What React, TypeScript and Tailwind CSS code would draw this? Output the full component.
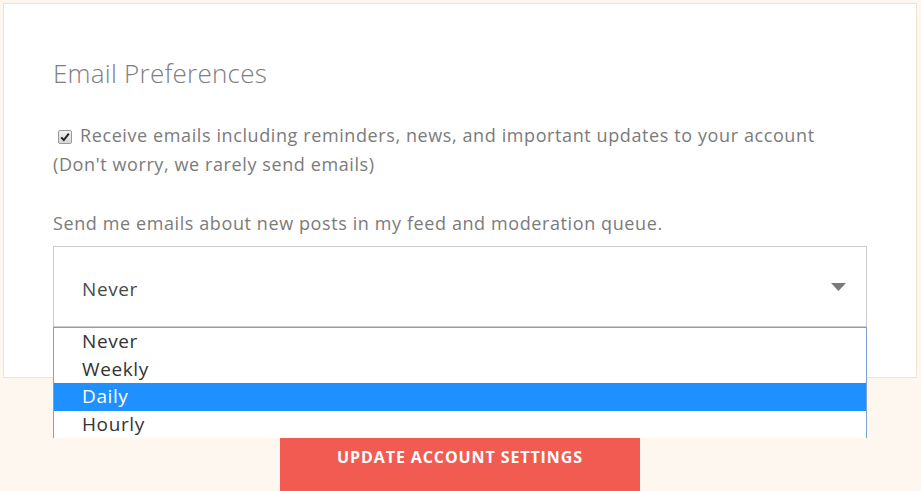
import { useState } from "react";

const options = ["Never", "Weekly", "Daily", "Hourly"];

const CheckMark = () => (
    <span className="inline-flex items-center justify-center w-[14px] h-[14px] rounded-[2px] border border-[#9a9a9a] bg-gradient-to-b from-[#f2f2f2] to-[#d6d6d6] mr-[8px] relative top-[1px]">
        <svg width="10" height="10" viewBox="0 0 10 10">
            <path d="M1.2 5.4 L3.8 8 L8.8 1.6" stroke="#222" strokeWidth="2" fill="none" />
        </svg>
    </span>
);

const App = () => {
    const [selected] = useState("Never");
    const [hovered, setHovered] = useState("Daily");

    return (
        <div
            className="w-[921px] h-[491px] bg-[#fdf7f0] overflow-hidden pt-[3px] pl-[3px] pr-[4px]"
            style={{ fontFamily: '"Open Sans", "Liberation Sans", sans-serif' }}
        >
            <div className="bg-white border border-[#efe3d6] px-[49px] pt-[54px] pb-[50px]">
                <h2 className="text-[26px] leading-[31px] font-light text-[#7e7e7e] tracking-[0.25px]">
                    Email Preferences
                </h2>
                <div className="mt-[32px] text-[18px] leading-[29px] text-[#7b7b7b] tracking-[0.6px]">
                    <label className="flex items-center pl-[5px]">
                        <CheckMark />
                        Receive emails including reminders, news, and important updates to your account
                    </label>
                    <div>(Don't worry, we rarely send emails)</div>
                </div>
                <p className="mt-[30px] text-[18px] leading-[29px] text-[#7b7b7b] tracking-[0.6px]">
                    Send me emails about new posts in my feed and moderation queue.
                </p>
                <div className="relative mt-[8px]">
                    <div className="h-[81px] border border-[#cccccc] flex items-center justify-between pl-[28px] pr-[20px] pt-[5px] text-[19px] text-[#4a4a4a] tracking-[0.6px]">
                        <span>{selected}</span>
                        <svg width="15" height="8" viewBox="0 0 15 8" className="-mt-[5px]">
                            <path d="M0 0 H15 L7.5 8 Z" fill="#7a7a7a" />
                        </svg>
                    </div>
                    <ul className="absolute left-0 right-0 top-[81px] h-[111px] overflow-hidden bg-white border border-b-0 border-[#7e9fd6] z-10">
                        {options.map((o) => (
                            <li
                                key={o}
                                onMouseEnter={() => setHovered(o)}
                                className={
                                    "h-[27.5px] leading-[27.5px] pl-[28px] text-[19px] tracking-[0.6px] " +
                                    (o === hovered ? "bg-[#1e90ff] text-white" : "text-[#333333]")
                                }
                            >
                                {o}
                            </li>
                        ))}
                    </ul>
                </div>
            </div>
            <div className="flex justify-center mt-[59px]">
                <button className="w-[360px] h-[60px] bg-[#f25b51] text-white text-[16px] font-bold uppercase pb-[20px] tracking-[0.9px]">
                    Update Account Settings
                </button>
            </div>
        </div>
    );
};

export default App;
